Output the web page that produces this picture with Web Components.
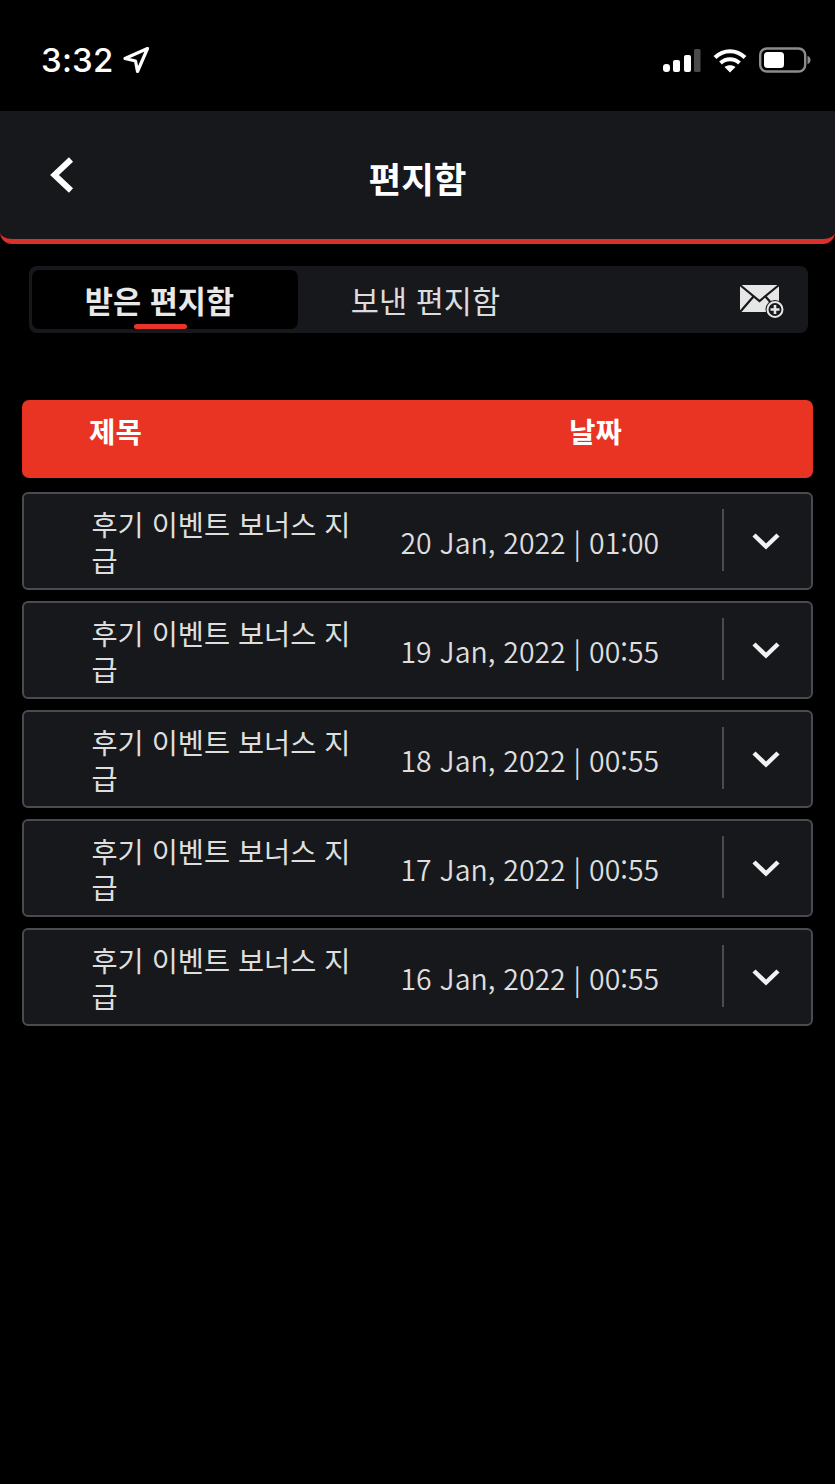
<!DOCTYPE html>
<html lang="ko">
<head>
<meta charset="utf-8">
<title>편지함</title>
<style>
  html, body { margin: 0; background: #000; }
  body { width: 835px; min-height: 1484px; font-family: "Noto Sans CJK KR", "Noto Sans", sans-serif; color: #e6e6e6; }
</style>
</head>
<body>
<status-bar time="3:32"></status-bar>
<page-header>편지함</page-header>
<mail-tabs></mail-tabs>
<mail-list>
  <mail-row subject="후기 이벤트 보너스 지급" date="20 Jan, 2022" time="01:00"></mail-row>
  <mail-row subject="후기 이벤트 보너스 지급" date="19 Jan, 2022" time="00:55"></mail-row>
  <mail-row subject="후기 이벤트 보너스 지급" date="18 Jan, 2022" time="00:55"></mail-row>
  <mail-row subject="후기 이벤트 보너스 지급" date="17 Jan, 2022" time="00:55"></mail-row>
  <mail-row subject="후기 이벤트 보너스 지급" date="16 Jan, 2022" time="00:55"></mail-row>
</mail-list>

<script>
class StatusBar extends HTMLElement {
  constructor() {
    super();
    this.shadowDOM = this.attachShadow({mode: 'open'});
  }

  connectedCallback() {
    this.shadowDOM.innerHTML = `
      <style>
        :host { display: flex; align-items: center; justify-content: space-between; height: 111px; box-sizing: border-box; padding: 9px 24px 0 41px; background: #000; color: #fff; }
        .left, .right { display: flex; align-items: center; }
        .time { font: 500 33px/40px Inter, "Noto Sans", sans-serif; letter-spacing: .2px; }
        .arrow { margin-left: 8px; }
        .right { gap: 12px; }
      </style>
      <div class="left">
        <span class="time">${this.getAttribute('time')}</span>
        <svg class="arrow" width="28" height="28" viewBox="0 0 28 28" fill="none" stroke="#fff" stroke-width="3.2" stroke-linejoin="round"><path d="M25.500 2.500 3 12.500 13.500 15 15.500 25.500z"/></svg>
      </div>
      <div class="right">
        <svg width="39" height="25" viewBox="0 0 39 25"><rect x="1" y="16" width="7" height="8" rx="3.200" fill="#fff"/><rect x="11" y="12" width="7" height="12" rx="2" fill="#fff"/><rect x="22" y="7" width="7" height="17" rx="2" fill="#fff"/><rect x="32" y="1" width="6.500" height="23" rx="1.500" fill="#4a4a4a"/></svg>
        <svg width="34" height="25" viewBox="0 0 34 25" fill="none" stroke="#fff" stroke-width="4"><path d="M2 9.500C10.500 1 23.500 1 32 9.500"/><path d="M7.500 15c5.500-5 13.500-5 19 0"/><path d="M17 24.500 11.500 19c3-2.500 8-2.500 11 0z" fill="#fff" stroke="none"/></svg>
        <svg width="52" height="26" viewBox="0 0 52 26"><rect x="1.200" y="1.500" width="45" height="23" rx="6.500" fill="none" stroke="#8c8c8c" stroke-width="2.400"/><rect x="5" y="5" width="20" height="16" rx="3.500" fill="#fff"/><path d="M48.500 9c2 .6 3 2 3 4s-1 3.400-3 4z" fill="#8c8c8c"/></svg>
      </div>
    `;
  }
}

class PageHeader extends HTMLElement {
  constructor() {
    super();
    this.shadowDOM = this.attachShadow({mode: 'open'});
  }

  connectedCallback() {
    this.shadowDOM.innerHTML = `
      <style>
        :host { display: block; }
        header { display: grid; grid-template-columns: 1fr auto 1fr; align-items: center; height: 133px; box-sizing: border-box; padding: 6px 0 0; background: #17181c; border-bottom: 5px solid #d9302a; border-radius: 0 0 12px 12px; }
        svg { display: block; margin: -7px 0 0 50px; }
        .title { font-size: 35.5px; font-weight: 700; line-height: 44px; color: #fff; }
      </style>
      <header>
        <svg width="24" height="36" viewBox="0 0 24 36" fill="none" stroke="#fff" stroke-width="6"><path d="M21 2.500 4.500 18 21 33.500"/></svg>
        <div class="title"><slot></slot></div>
        <span></span>
      </header>
    `;
  }
}

class MailTabs extends HTMLElement {
  constructor() {
    super();
    this.shadowDOM = this.attachShadow({mode: 'open'});
  }

  connectedCallback() {
    this.shadowDOM.innerHTML = `
      <style>
        :host { display: flex; align-items: center; height: 67px; margin: 22px 27px 0 29px; box-sizing: border-box; padding: 4px 23px 4px 3px; background: #17181c; border-radius: 8px; font-size: 30.6px; line-height: 40px; }
        .tab { flex: 0 0 266px; height: 59px; display: flex; align-items: center; justify-content: center; box-sizing: border-box; padding: 1px 11px 0 0; }
        .active { position: relative; background: #000; border-radius: 7px; font-weight: 700; color: #e8e8e8; }
        .active::after { content: ""; position: absolute; left: 102px; bottom: 0; width: 53px; height: 5px; border-radius: 3px; background: #e7352a; }
        .other { color: #dcdcdc; font-weight: 400; }
        svg { margin: 3px 0 0 auto; display: block; }
      </style>
      <div class="tab active">받은 편지함</div>
      <div class="tab other">보낸 편지함</div>
      <svg width="46" height="38" viewBox="0 0 46 38">
        <path d="M1 3h39v27H1z" fill="#e6e6e6"/>
        <path d="M1 3 20.500 19 40 3M1 30 14.500 14.500M40 30 26.500 14.500" fill="none" stroke="#17181c" stroke-width="2.200"/>
        <circle cx="36" cy="27.500" r="9.500" fill="#17181c"/>
        <circle cx="36" cy="27.500" r="7.500" fill="none" stroke="#e6e6e6" stroke-width="2"/>
        <path d="M36 23v9M31.500 27.500h9" stroke="#e6e6e6" stroke-width="2.600"/>
      </svg>
    `;
  }
}

class MailList extends HTMLElement {
  constructor() {
    super();
    this.shadowDOM = this.attachShadow({mode: 'open'});
  }

  connectedCallback() {
    this.shadowDOM.innerHTML = `
      <style>
        :host { display: flex; flex-direction: column; gap: 11px; margin: 67px 22px 0; }
        .head { display: grid; grid-template-columns: 480px 1fr; height: 78px; margin-bottom: 2.500px; box-sizing: border-box; padding: 11px 0 0 67px; background: #ea3423; border-radius: 7px; color: #fff; font-size: 28.7px; font-weight: 700; line-height: 40px; }
      </style>
      <div class="head"><div>제목</div><div>날짜</div></div>
      <slot></slot>
    `;
  }
}

class MailRow extends HTMLElement {
  constructor() {
    super();
    this.shadowDOM = this.attachShadow({mode: 'open'});
  }

  connectedCallback() {
    this.shadowDOM.innerHTML = `
      <style>
        :host { display: grid; grid-template-columns: 309px 321.500px 1fr; align-items: center; height: 98px; box-sizing: border-box; padding-left: 67.500px; background: #17181c; border: 2px solid #4a4b4f; border-radius: 6px; color: #dedede; font-size: 28.400px; font-weight: 400; }
        .subject { width: 268px; line-height: 36px; margin-top: 3px; }
        .date { line-height: 40px; white-space: nowrap; margin-top: 3px; font-weight: 350; }
        .more { display: flex; align-items: center; justify-content: center; height: 62px; border-left: 2px solid #4a4b4f; margin-top: -1px; padding-right: 3px; }
        svg { display: block; margin-top: 1px; }
      </style>
      <div class="subject">${this.getAttribute('subject')}</div>
      <div class="date">${this.getAttribute('date')} | ${this.getAttribute('time')}</div>
      <div class="more">
        <svg width="28" height="18" viewBox="0 0 28 18" fill="none" stroke="#f2f2f2" stroke-width="4.500"><path d="M2 3l12 11.500L26 3"/></svg>
      </div>
    `;
  }
}

customElements.define('status-bar', StatusBar);
customElements.define('page-header', PageHeader);
customElements.define('mail-tabs', MailTabs);
customElements.define('mail-list', MailList);
customElements.define('mail-row', MailRow);
</script>
</body>
</html>
